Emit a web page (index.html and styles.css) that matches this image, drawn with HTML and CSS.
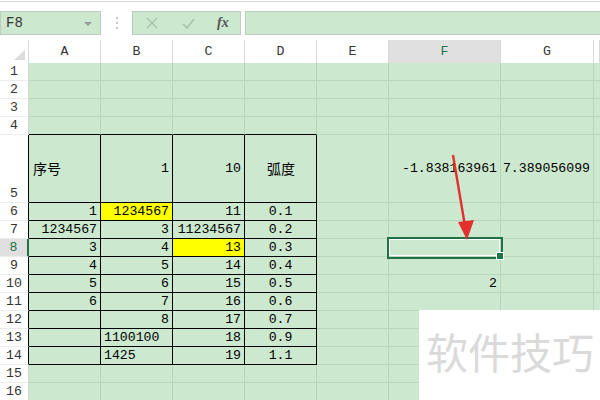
FILE: index.html
```html
<!DOCTYPE html>
<html lang="zh-CN">

<head>
    <meta charset="UTF-8">
    <meta name="viewport" content="width=device-width, initial-scale=1.0">
    <title>Sheet</title>
    <link rel="stylesheet" href="styles.css">
</head>

<body>
    <div class="strip"></div>

    <div class="fbar">
        <div class="namebox">F8<span class="caret"></span></div>
        <div class="dots">
            <svg width="4" height="14" viewBox="0 0 4 14">
                <circle cx="2" cy="2" r="1" fill="#b5b5b5" />
                <circle cx="2" cy="7" r="1" fill="#b5b5b5" />
                <circle cx="2" cy="12" r="1" fill="#b5b5b5" />
            </svg>
        </div>
        <div class="fxbox">
            <svg class="ico" width="12" height="12" viewBox="0 0 12 12">
                <path d="M1 1 L11 11 M11 1 L1 11" stroke="#a6c2a9" stroke-width="1.3" fill="none" />
            </svg>
            <svg class="ico" width="13" height="11" viewBox="0 0 13 11">
                <path d="M1 6 L5 10 L12 1" stroke="#a6c2a9" stroke-width="1.5" fill="none" />
            </svg>
            <span class="fx">fx</span>
        </div>
        <div class="finput"></div>
    </div>

    <div class="gap"></div>

    <div class="sheet">
        <div class="row head">
            <div class="corner">
                <svg width="11" height="10" viewBox="0 0 11 10">
                    <path d="M11 0 L11 10 L0 10 Z" fill="#dcdcdc" />
                </svg>
            </div>
            <div class="ch">A</div>
            <div class="ch">B</div>
            <div class="ch">C</div>
            <div class="ch">D</div>
            <div class="ch">E</div>
            <div class="ch on">F</div>
            <div class="ch">G</div>
            <div class="ch"></div>
        </div>

        <div class="row">
            <div class="rh">1</div>
            <div class="c"></div><div class="c"></div><div class="c"></div><div class="c"></div>
            <div class="c"></div><div class="c"></div><div class="c"></div><div class="c"></div>
        </div>
        <div class="row">
            <div class="rh">2</div>
            <div class="c"></div><div class="c"></div><div class="c"></div><div class="c"></div>
            <div class="c"></div><div class="c"></div><div class="c"></div><div class="c"></div>
        </div>
        <div class="row">
            <div class="rh">3</div>
            <div class="c"></div><div class="c"></div><div class="c"></div><div class="c"></div>
            <div class="c"></div><div class="c"></div><div class="c"></div><div class="c"></div>
        </div>
        <div class="row">
            <div class="rh">4</div>
            <div class="c above"></div><div class="c above"></div><div class="c above"></div><div class="c above"></div>
            <div class="c"></div><div class="c"></div><div class="c"></div><div class="c"></div>
        </div>

        <div class="row tall">
            <div class="rh edge">5</div>
            <div class="c t cjk">序号</div>
            <div class="c t n">1</div>
            <div class="c t n">10</div>
            <div class="c t mid cjk">弧度</div>
            <div class="c"></div>
            <div class="c n">-1.838163961</div>
            <div class="c n">7.389056099</div>
            <div class="c"></div>
        </div>
        <div class="row">
            <div class="rh edge">6</div>
            <div class="c t n">1</div>
            <div class="c t n yel">1234567</div>
            <div class="c t n">11</div>
            <div class="c t mid">0.1</div>
            <div class="c"></div><div class="c"></div><div class="c"></div><div class="c"></div>
        </div>
        <div class="row">
            <div class="rh edge">7</div>
            <div class="c t n">1234567</div>
            <div class="c t n">3</div>
            <div class="c t n">11234567</div>
            <div class="c t mid">0.2</div>
            <div class="c"></div><div class="c"></div><div class="c"></div><div class="c"></div>
        </div>
        <div class="row">
            <div class="rh edge cur">8</div>
            <div class="c t n">3</div>
            <div class="c t n">4</div>
            <div class="c t n yel">13</div>
            <div class="c t mid">0.3</div>
            <div class="c"></div>
            <div class="c sel"></div>
            <div class="c"></div><div class="c"></div>
        </div>
        <div class="row">
            <div class="rh edge">9</div>
            <div class="c t n">4</div>
            <div class="c t n">5</div>
            <div class="c t n">14</div>
            <div class="c t mid">0.4</div>
            <div class="c"></div><div class="c"></div><div class="c"></div><div class="c"></div>
        </div>
        <div class="row">
            <div class="rh edge">10</div>
            <div class="c t n">5</div>
            <div class="c t n">6</div>
            <div class="c t n">15</div>
            <div class="c t mid">0.5</div>
            <div class="c"></div>
            <div class="c n">2</div>
            <div class="c"></div><div class="c"></div>
        </div>
        <div class="row">
            <div class="rh edge">11</div>
            <div class="c t n">6</div>
            <div class="c t n">7</div>
            <div class="c t n">16</div>
            <div class="c t mid">0.6</div>
            <div class="c"></div><div class="c"></div><div class="c"></div><div class="c"></div>
        </div>
        <div class="row">
            <div class="rh edge">12</div>
            <div class="c t"></div>
            <div class="c t n">8</div>
            <div class="c t n">17</div>
            <div class="c t mid mark">0.7</div>
            <div class="c"></div><div class="c"></div><div class="c"></div><div class="c"></div>
        </div>
        <div class="row">
            <div class="rh edge">13</div>
            <div class="c t"></div>
            <div class="c t">1100100</div>
            <div class="c t n">18</div>
            <div class="c t mid">0.9</div>
            <div class="c"></div><div class="c"></div><div class="c"></div><div class="c"></div>
        </div>
        <div class="row">
            <div class="rh edge">14</div>
            <div class="c t"></div>
            <div class="c t">1425</div>
            <div class="c t n">19</div>
            <div class="c t mid">1.1</div>
            <div class="c"></div><div class="c"></div><div class="c"></div><div class="c"></div>
        </div>
        <div class="row">
            <div class="rh">15</div>
            <div class="c"></div><div class="c"></div><div class="c"></div><div class="c"></div>
            <div class="c"></div><div class="c"></div><div class="c"></div><div class="c"></div>
        </div>
        <div class="row">
            <div class="rh">16</div>
            <div class="c"></div><div class="c"></div><div class="c"></div><div class="c"></div>
            <div class="c"></div><div class="c"></div><div class="c"></div><div class="c"></div>
        </div>
    </div>

    <!-- red arrow drawn over the sheet -->
    <svg class="arrow" width="600" height="400" viewBox="0 0 600 400">
        <path d="M453 155 L465 226" stroke="#e3302e" stroke-width="2.4" fill="none" />
        <path d="M458 222 L474 220 L467 240 Z" fill="#e3302e" />
    </svg>

    <div class="mark-box">软件技巧</div>
</body>

</html>
```

FILE: styles.css
```css
* {
    margin: 0;
    padding: 0;
    box-sizing: border-box;
}

body {
    width: 600px;
    height: 400px;
    overflow: hidden;
    background-color: #fff;
    font-family: "Liberation Mono", "DejaVu Sans Mono", monospace;
    font-size: 13.2px;
    color: #000;
}

.strip {
    height: 10px;
    margin-top: 1px;
    border-top: 1px solid #d8d8d8;
}

/* formula bar */
.fbar {
    display: flex;
    height: 24px;
}

.namebox {
    position: relative;
    width: 101px;
    background-color: #cce8cf;
    border: 1px solid #bcccbe;
    padding-left: 5px;
    line-height: 22px;
    font-size: 14px;
    color: #333;
}

.caret {
    position: absolute;
    right: 8px;
    top: 10px;
    border-left: 4px solid transparent;
    border-right: 4px solid transparent;
    border-top: 4px solid #9a9a9a;
}

.dots {
    width: 31px;
    display: flex;
    align-items: center;
    justify-content: center;
}

.fxbox {
    width: 109px;
    display: flex;
    align-items: center;
    background-color: #cce8cf;
    border: 1px solid #bcccbe;
    padding-left: 13px;
    gap: 24px;
}

.fx {
    font-family: "Liberation Serif", serif;
    font-style: italic;
    font-weight: bold;
    font-size: 14px;
    color: #555;
    margin-left: -2px;
}

.finput {
    flex: 1;
    margin-left: 4px;
    background-color: #cce8cf;
    border: 1px solid #bcccbe;
    border-right: none;
}

.gap {
    height: 5px;
}

/* sheet grid */
.row {
    display: grid;
    grid-template-columns: 29px 72px 72px 72px 72px 72px 112px 93px 1fr;
    height: 18px;
}

.row.tall {
    height: 68px;
}

.row.head {
    height: 23px;
}

.corner {
    background-color: #fff;
    border-right: 1px solid #dadada;
    border-bottom: 1px solid #c8c8c8;
    display: flex;
    align-items: flex-end;
    justify-content: flex-end;
    padding: 0 3px 4px 0;
}

.ch {
    background-color: #fff;
    border-right: 1px solid #dadada;
    border-bottom: 1px solid #c8c8c8;
    text-align: center;
    line-height: 23px;
    color: #333;
}

.ch.on {
    background-color: #e0e0e0;
    color: #217346;
    border-bottom: 2px solid #217346;
}

.rh {
    background-color: #fff;
    border-right: 1px solid #d4d4d4;
    border-bottom: 1px solid #ececec;
    display: flex;
    align-items: flex-end;
    justify-content: center;
    line-height: 17px;
    color: #333;
}

.rh.edge {
    border-right-color: #000;
}

.rh.cur {
    background-color: #e0e0e0;
    color: #217346;
    border-right: 2px solid #217346;
}

.c {
    background-color: #cce8cf;
    border-right: 1px solid #b9d7bc;
    border-bottom: 1px solid #b9d7bc;
    display: flex;
    align-items: center;
    padding: 0 3px;
    white-space: nowrap;
    overflow: visible;
    line-height: 17px;
}

.c.above {
    border-bottom-color: #000;
}

.c.t {
    border-right-color: #000;
    border-bottom-color: #000;
}

.n {
    justify-content: flex-end;
}

.mid {
    justify-content: center;
}

.cjk {
    font-family: "Noto Sans CJK SC", sans-serif;
    font-size: 14px;
    padding-left: 4px;
}

.yel {
    background-color: #ffff00;
}

.mark {
    box-shadow: 1px 0 0 #e05050;
}

.sel {
    position: relative;
    z-index: 1;
    box-shadow: 0 0 0 2px #217346, inset 0 0 0 1px #fff;
}

.sel::after {
    content: "";
    position: absolute;
    right: -4px;
    bottom: -4px;
    width: 6px;
    height: 6px;
    background-color: #217346;
    border: 1px solid #fff;
}

/* overlays */
.arrow {
    position: absolute;
    left: 0;
    top: 0;
    z-index: 2;
    pointer-events: none;
}

.mark-box {
    position: absolute;
    left: 419px;
    top: 310px;
    width: 181px;
    height: 90px;
    z-index: 3;
    background-color: #fff;
    padding: 20px 0 0 7px;
    font-family: "Noto Sans CJK SC", sans-serif;
    font-size: 42px;
    line-height: 1;
    color: #dadada;
    white-space: nowrap;
}
```
